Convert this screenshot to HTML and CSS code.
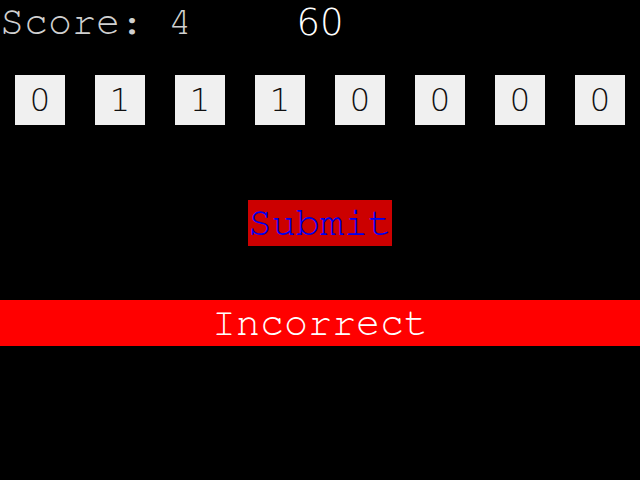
FILE: index.html
```html
<!DOCTYPE html>
<html>
<head>
<meta charset="utf-8">
<link rel="stylesheet" href="styles.css">
</head>
<body>
<div class="header">
  <div class="score">Score: 4</div>
  <div class="timer">60</div>
  <div></div>
</div>
<div class="bits">
  <div class="bit">0</div>
  <div class="bit">1</div>
  <div class="bit">1</div>
  <div class="bit">1</div>
  <div class="bit">0</div>
  <div class="bit">0</div>
  <div class="bit">0</div>
  <div class="bit">0</div>
</div>
<div class="actions">
  <span class="submit">Submit</span>
</div>
<div class="result">Incorrect</div>
</body>
</html>
```
FILE: styles.css
```css
html, body {
  margin: 0;
  padding: 0;
  background: #000;
  width: 640px;
  height: 480px;
  overflow: hidden;
}
.header {
  display: grid;
  grid-template-columns: 1fr auto 1fr;
  height: 45px;
  align-items: start;
}
.score {
  font-family: "Nimbus Mono PS", "Nimbus Mono L", "FreeMono", "Courier 10 Pitch", "Courier", "Liberation Mono", monospace;
  font-size: 40px;
  line-height: 45px;
  color: #d0d0d0;
}
.timer {
  font-family: "DejaVu Sans", sans-serif;
  font-weight: 200;
  font-size: 37px;
  line-height: 45px;
  color: #fff;
}
.bits {
  display: flex;
  gap: 30px;
  padding-left: 15px;
  margin-top: 30px;
}
.bit {
  width: 50px;
  height: 50px;
  background: #f0f0f0;
  color: #111;
  font-family: "DejaVu Sans", sans-serif;
  font-weight: 200;
  font-size: 32px;
  display: flex;
  align-items: center;
  justify-content: center;
}
.actions {
  display: flex;
  justify-content: center;
  margin-top: 75px;
}
.submit {
  background: #cc0000;
  color: #0000ee;
  font-family: "Nimbus Mono PS", "Nimbus Mono L", "FreeMono", "Courier 10 Pitch", "Courier", "Liberation Mono", monospace;
  font-size: 40px;
  line-height: 46px;
  height: 46px;
}
.result {
  margin-top: 54px;
  height: 46px;
  line-height: 46px;
  background: #ff0000;
  color: #fff;
  text-align: center;
  font-family: "Nimbus Mono PS", "Nimbus Mono L", "FreeMono", "Courier 10 Pitch", "Courier", "Liberation Mono", monospace;
  font-size: 40px;
}
```
